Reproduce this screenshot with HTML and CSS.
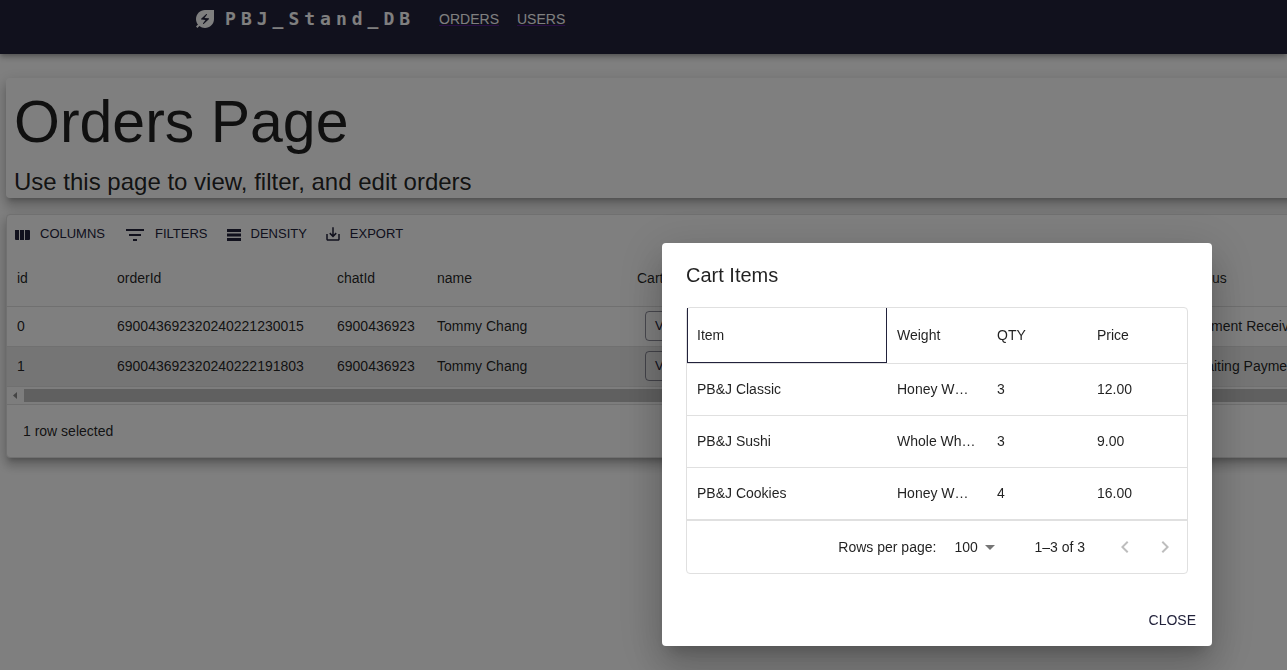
FILE: index.html
```html
<!DOCTYPE html>
<html lang="en">
<head>
<meta charset="utf-8">
<title>PBJ_Stand_DB</title>
<link rel="stylesheet" href="styles.css">
</head>
<body>
<header class="app-bar">
  <div class="brand">
    <svg class="brand-icon" viewBox="0 0 24 24" aria-hidden="true"><path d="M12 3c-4.8 0-9 3.86-9 9 0 2.12.74 4.07 1.97 5.61L3 19.59 4.41 21l1.97-1.97C7.93 20.26 9.88 21 12 21c2.3 0 4.61-.88 6.36-2.64C20.12 16.61 21 14.3 21 12V3h-9zm3.83 9.26-5.16 4.63c-.16.15-.41.14-.56-.01-.14-.16-.16-.39-.04-.55l2.44-3.33-4.05-.4c-.44-.04-.63-.59-.3-.89l5.16-4.63c.16-.15.41-.14.56.01.14.15.16.39.04.55l-2.44 3.33 4.05.4c.44.04.63.59.3.89z"/></svg>
    <span class="brand-name">PBJ_Stand_DB</span>
  </div>
  <nav class="nav">
    <a class="nav-link" href="#orders">ORDERS</a>
    <a class="nav-link" href="#users">USERS</a>
  </nav>
</header>

<main class="page">
  <section class="paper intro">
    <h1 class="intro-title">Orders Page</h1>
    <p class="intro-text">Use this page to view, filter, and edit orders</p>
  </section>

  <section class="paper grid">
    <div class="toolbar">
      <button class="tool" type="button">
        <svg class="tool-icon" viewBox="0 0 18 18" aria-hidden="true"><path d="M1 5h4v10H2a1 1 0 0 1-1-1zM6 5h4v10H6zM11 5h4a1 1 0 0 1 1 1v8a1 1 0 0 1-1 1h-4z"/></svg>
        COLUMNS
      </button>
      <button class="tool tool-filters" type="button">
        <svg class="tool-icon" viewBox="0 0 18 18" aria-hidden="true"><path d="M0 4h18v2H0zM3 9h12v2H3zM7 14h4v2H7z"/></svg>
        FILTERS
      </button>
      <button class="tool" type="button">
        <svg class="tool-icon" viewBox="0 0 18 18" aria-hidden="true"><path d="M2 4h14v3H2zM2 8.600h14v2.800H2zM2 13h14v3H2z"/></svg>
        DENSITY
      </button>
      <button class="tool" type="button">
        <svg class="tool-icon" viewBox="0 0 24 24" aria-hidden="true"><path d="M19 12v7H5v-7H3v7c0 1.100.9 2 2 2h14c1.100 0 2-.9 2-2v-7h-2zm-6 .67l2.590-2.580L17 11.500l-5 5-5-5 1.410-1.410L11 12.670V3h2z"/></svg>
        EXPORT
      </button>
    </div>
    <table class="orders">
      <colgroup><col class="w100"><col class="w220"><col class="w100"><col class="w200"><col class="w100"><col class="w450"><col></colgroup>
      <thead>
        <tr><th>id</th><th>orderId</th><th>chatId</th><th>name</th><th>Cart</th><th></th><th>Status</th></tr>
      </thead>
      <tbody>
        <tr><td>0</td><td>690043692320240221230015</td><td>6900436923</td><td>Tommy Chang</td><td><button class="view" type="button">VIEW</button></td><td></td><td>Payment Received</td></tr>
        <tr class="selected"><td>1</td><td>690043692320240222191803</td><td>6900436923</td><td>Tommy Chang</td><td><button class="view" type="button">VIEW</button></td><td></td><td>Awaiting Payment</td></tr>
      </tbody>
    </table>
    <div class="scroll-track">
      <svg class="scroll-arrow" viewBox="0 0 17 17" aria-hidden="true"><path d="M10 5v7L6 8.500z"/></svg>
      <div class="scroll-thumb"></div>
    </div>
    <div class="grid-footer">1 row selected</div>
  </section>
</main>

<div class="backdrop">
  <div class="dialog" role="dialog" aria-modal="true" aria-labelledby="cart-title">
    <h2 class="dialog-title" id="cart-title">Cart Items</h2>
    <div class="dialog-content">
      <div class="cart">
        <table class="cart-table">
          <colgroup><col class="w200"><col class="w100"><col class="w100"><col class="w100"></colgroup>
          <thead>
            <tr><th class="focused">Item</th><th>Weight</th><th>QTY</th><th>Price</th></tr>
          </thead>
          <tbody>
            <tr><td>PB&amp;J Classic</td><td>Honey Wheat</td><td>3</td><td>12.00</td></tr>
            <tr><td>PB&amp;J Sushi</td><td>Whole Wheat</td><td>3</td><td>9.00</td></tr>
            <tr><td>PB&amp;J Cookies</td><td>Honey Wheat</td><td>4</td><td>16.00</td></tr>
          </tbody>
        </table>
        <div class="pagination">
          <label class="rows-label" for="rows">Rows per page:</label>
          <div class="rows-select">
            <select id="rows"><option>100</option></select>
            <svg class="caret" viewBox="0 0 24 24" aria-hidden="true"><path d="M7 10l5 5 5-5z"/></svg>
          </div>
          <span class="range">1–3 of 3</span>
          <button class="page-btn" type="button" aria-label="Previous page" disabled><svg viewBox="0 0 24 24" aria-hidden="true"><path d="M15.410 7.410L14 6l-6 6 6 6 1.410-1.410L10.830 12z"/></svg></button>
          <button class="page-btn" type="button" aria-label="Next page" disabled><svg viewBox="0 0 24 24" aria-hidden="true"><path d="M10 6L8.590 7.410 13.170 12l-4.580 4.590L10 18l6-6z"/></svg></button>
        </div>
      </div>
    </div>
    <div class="dialog-actions"><button class="close" type="button">CLOSE</button></div>
  </div>
</div>
</body>
</html>
```

FILE: styles.css
```css
* {
  box-sizing: border-box;
}

body {
  min-height: 100vh;
  margin: 0;
  overflow-x: hidden;
  background: #fff;
  color: rgba(0, 0, 0, 0.87);
  font: 14px/20px "Liberation Sans", Arial, sans-serif;
}

button,
select {
  font: inherit;
  background: none;
  border: 0;
}

svg {
  fill: currentColor;
  flex: none;
}

/* App bar */
.app-bar {
  display: flex;
  align-items: flex-start;
  gap: 24px;
  height: 54px;
  padding: 7px 24px 0 15%;
  background: #22223b;
  color: #fff;
  box-shadow: 0 2px 4px -1px rgba(0, 0, 0, 0.2), 0 4px 5px rgba(0, 0, 0, 0.14), 0 1px 10px rgba(0, 0, 0, 0.12);
}

.brand {
  display: flex;
  align-items: center;
  gap: 8px;
}

.brand-icon {
  width: 24px;
  height: 24px;
}

.brand-name {
  font: 700 18px/24px "DejaVu Sans Mono", monospace;
  letter-spacing: 5px;
}

.nav {
  display: flex;
  gap: 18px;
  line-height: 24px;
}

.nav-link {
  color: #fff;
  text-decoration: underline #551a8b;
}

/* Page */
.page {
  display: flex;
  flex-direction: column;
  gap: 16px;
  margin-right: -160px;
  padding: 24px 0 0 6px;
}

.paper {
  background: #fff;
  border-radius: 4px;
  box-shadow: 0 5px 5px -3px rgba(0, 0, 0, 0.2), 0 8px 10px 1px rgba(0, 0, 0, 0.14), 0 3px 14px 2px rgba(0, 0, 0, 0.12);
}

.intro {
  padding: 8px 8px 0;
}

.intro-title {
  margin: 0 0 8px;
  font-size: 59px;
  font-weight: 400;
  line-height: 72px;
}

.intro-text {
  margin: 0;
  font-size: 24px;
  line-height: 32px;
}

/* Orders grid */
.grid {
  border: 1px solid #e0e0e0;
}

.toolbar {
  display: flex;
  gap: 17px;
  height: 36px;
  padding: 4px 7px 0;
}

.tool {
  display: flex;
  align-items: center;
  gap: 8px;
  height: 30px;
  padding: 0;
  color: #22223b;
  font-size: 13px;
}

.tool-filters {
  padding-left: 4px;
  gap: 11px;
}

.tool-icon {
  width: 18px;
  height: 18px;
}

.orders,
.cart-table {
  width: 100%;
  border-collapse: separate;
  border-spacing: 0;
  table-layout: fixed;
}

.w100 { width: 100px; }
.w200 { width: 200px; }
.w220 { width: 220px; }
.w450 { width: 450px; }

th,
td {
  padding: 0 11px 2px 10px;
  border-bottom: 1px solid #e0e0e0;
  font-weight: 400;
  text-align: left;
  white-space: nowrap;
  overflow: hidden;
  text-overflow: ellipsis;
}

th {
  height: 56px;
}

.orders td {
  height: 40px;
}

.orders td,
.orders th {
  padding-right: 0;
}

.selected {
  background: #ebebeb;
}

.view {
  display: block;
  height: 30px;
  margin-left: 8px;
  padding: 0 9px;
  border: 1px solid rgba(34, 34, 59, 0.5);
  border-radius: 4px;
  color: #22223b;
  font-size: 13px;
}

.scroll-track {
  display: flex;
  align-items: center;
  height: 17px;
  background: #fafafa;
}

.scroll-arrow {
  width: 17px;
  height: 17px;
  color: #8a8a8a;
}

.scroll-thumb {
  flex: 1;
  height: 13px;
  background: #c1c1c1;
}

.grid-footer {
  padding: 16px;
  border-top: 1px solid #e0e0e0;
}

/* Cart dialog */
.backdrop {
  position: fixed;
  inset: 0;
  display: flex;
  justify-content: flex-end;
  align-items: flex-end;
  padding: 24px 75px 24px 24px;
  background: rgba(0, 0, 0, 0.5);
}

.dialog {
  width: 550px;
  background: #fff;
  border-radius: 4px;
  box-shadow: 0 11px 15px -7px rgba(0, 0, 0, 0.2), 0 24px 38px 3px rgba(0, 0, 0, 0.14), 0 9px 46px 8px rgba(0, 0, 0, 0.12);
}

.dialog-title {
  margin: 0;
  padding: 16px 24px;
  font-size: 20px;
  font-weight: 400;
  line-height: 32px;
}

.dialog-content {
  padding: 0 24px 20px;
}

.cart {
  border: 1px solid #e0e0e0;
  border-radius: 4px;
}

.cart-table td {
  height: 52px;
}

.focused {
  box-shadow: inset 1px 0 #22223b, inset -1px -1px #22223b;
}

.pagination {
  display: flex;
  align-items: center;
  justify-content: flex-end;
  height: 53px;
  padding-right: 2px;
  border-top: 1px solid #e0e0e0;
}

.rows-select {
  position: relative;
  margin: 0 32px 0 18px;
}

.rows-select select {
  display: block;
  width: 48px;
  height: 24px;
  padding: 0;
  color: inherit;
  appearance: none;
}

.caret {
  position: absolute;
  top: 0;
  right: 0;
  width: 24px;
  height: 24px;
  color: rgba(0, 0, 0, 0.54);
  pointer-events: none;
}

.range {
  margin-right: 20px;
}

.page-btn {
  display: flex;
  justify-content: center;
  width: 40px;
  padding: 0;
  color: rgba(0, 0, 0, 0.26);
}

.page-btn svg {
  width: 24px;
  height: 24px;
}

.dialog-actions {
  display: flex;
  justify-content: flex-end;
  padding: 8px;
}

.close {
  height: 36px;
  padding: 0 8px;
  color: #22223b;
}
```
